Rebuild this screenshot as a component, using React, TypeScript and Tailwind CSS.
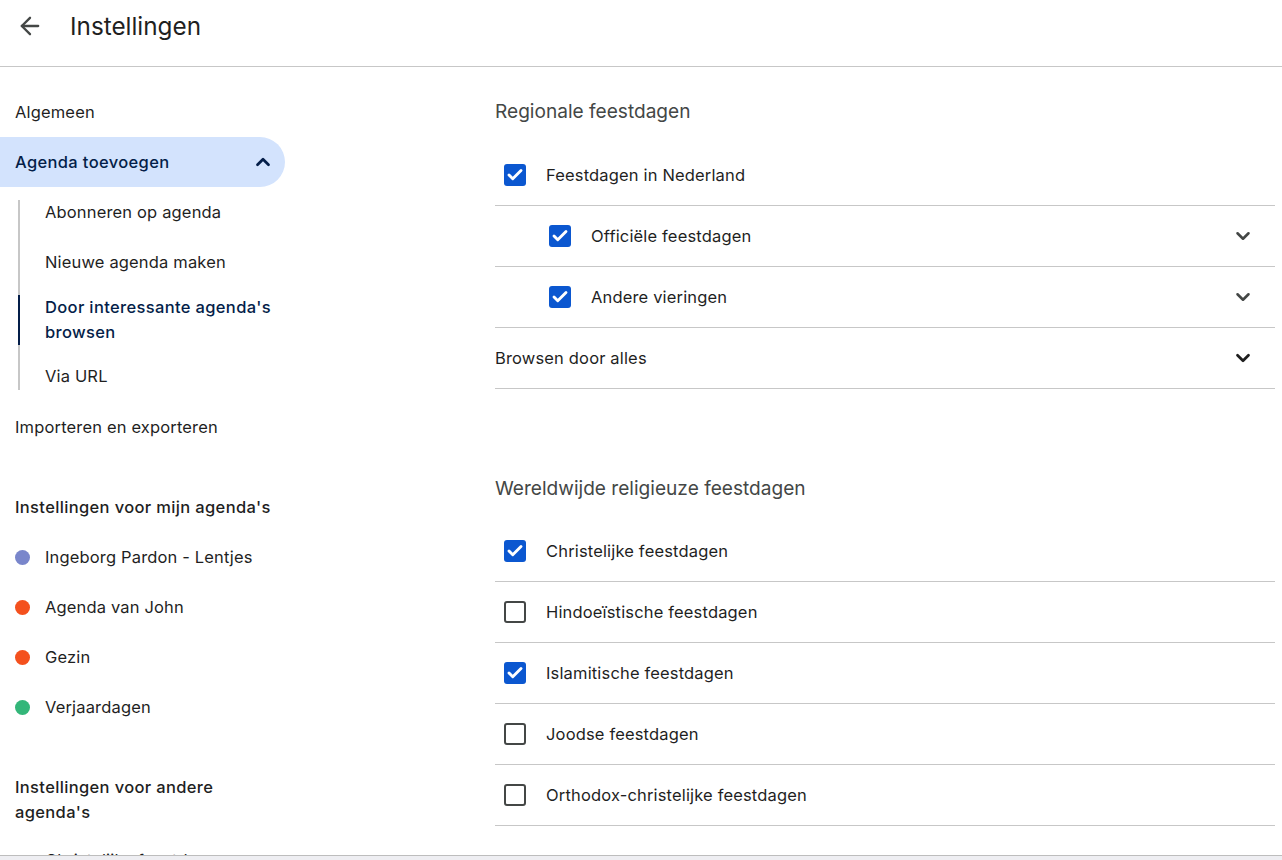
import { ArrowLeft, Check, ChevronDown, ChevronUp } from 'lucide-react'

const font = { fontFamily: 'Inter, sans-serif' }

const calendars = [
  { name: 'Ingeborg Pardon - Lentjes', dot: 'bg-[#7986cb]' },
  { name: 'Agenda van John', dot: 'bg-[#f4511e]' },
  { name: 'Gezin', dot: 'bg-[#f4511e]' },
  { name: 'Verjaardagen', dot: 'bg-[#33b679]' },
]

const religious = [
  { label: 'Christelijke feestdagen', checked: true },
  { label: 'Hindoeïstische feestdagen', checked: false },
  { label: 'Islamitische feestdagen', checked: true },
  { label: 'Joodse feestdagen', checked: false },
  { label: 'Orthodox-christelijke feestdagen', checked: false },
]

function Checkbox({ checked }: { checked: boolean }) {
  if (!checked) {
    return <div className="w-[22px] h-[22px] shrink-0 rounded-[3px] border-2 border-[#444746]" />
  }
  return (
    <div className="w-[22px] h-[22px] shrink-0 rounded-[3px] bg-[#0b57d0] flex items-center justify-center">
      <Check className="w-[18px] h-[18px] text-white" strokeWidth={3.8} />
    </div>
  )
}

function Row({ label, checked, nested, chevron }: { label: string; checked: boolean; nested?: boolean; chevron?: boolean }) {
  return (
    <div className={`h-[61px] flex items-center border-b border-[#c7c7c7] ${nested ? 'pl-[54px]' : 'pl-[9px]'}`}>
      <Checkbox checked={checked} />
      <span className="ml-[20px] text-[16.5px] tracking-[0.16px] text-[#1f1f1f]">{label}</span>
      {chevron && <ChevronDown className="w-[22px] h-[22px] ml-auto mr-[21px] text-[#444746]" strokeWidth={2.8} />}
    </div>
  )
}

export default function App() {
  return (
    <div style={font} className="w-[1282px] h-[860px] overflow-hidden bg-white relative">
      <header className="h-[67px] border-b border-[#c7c7c7] flex items-center pb-[14px]">
        <ArrowLeft className="w-[28px] h-[28px] ml-[16px] text-[#444746]" strokeWidth={2} />
        <h1 className="ml-[26px] text-[24.3px] text-[#1f1f1f]">Instellingen</h1>
      </header>

      <div className="flex">
        <nav className="w-[285px] shrink-0 pt-[20px] text-[16.5px] tracking-[0.16px] text-[#1f1f1f]">
          <div className="h-[50px] pl-[15px] flex items-center">Algemeen</div>
          <div className="h-[50px] pl-[15px] pr-[11px] flex items-center justify-between rounded-r-full bg-[#d3e3fd] text-[#041e49] font-medium tracking-[0.35px]">
            Agenda toevoegen
            <ChevronUp className="w-[22px] h-[22px]" strokeWidth={3} />
          </div>

          <div className="ml-[18px] mt-[13px] h-[190px] border-l-2 border-[#c7c7c7] flex flex-col">
            <div className="h-[24px] pl-[25px] flex items-center">Abonneren op agenda</div>
            <div className="h-[50px] mt-[13px] pl-[25px] flex items-center">Nieuwe agenda maken</div>
            <div className="-ml-[2px] h-[50px] mt-[8px] pl-[25px] border-l-2 border-[#041e49] text-[#041e49] font-medium tracking-[0.35px] leading-[25px] flex items-center">
              Door interessante agenda's browsen
            </div>
            <div className="h-[27px] mt-[18px] pl-[25px] flex items-center">Via URL</div>
          </div>

          <div className="h-[50px] mt-[12px] pl-[15px] flex items-center">Importeren en exporteren</div>

          <div className="h-[50px] mt-[30px] pl-[15px] flex items-center font-medium tracking-[0.35px] whitespace-nowrap">Instellingen voor mijn agenda's</div>
          {calendars.map(c => (
            <div key={c.name} className="h-[50px] pl-[15px] flex items-center">
              <span className={`w-[15px] h-[15px] rounded-full ${c.dot}`} />
              <span className="ml-[15px]">{c.name}</span>
            </div>
          ))}

          <div className="mt-[43px] pl-[15px] pr-[40px] font-medium tracking-[0.35px] leading-[25px]">Instellingen voor andere agenda's</div>
          <div className="mt-[23px] pl-[45px] text-[#1f1f1f] whitespace-nowrap">Christelijke feestdagen</div>
        </nav>

        <main className="ml-[210px] w-[780px]">
          <h2 className="mt-[30px] text-[19.1px] leading-[28px] text-[#444746]">Regionale feestdagen</h2>
          <div className="mt-[20px]">
            <Row label="Feestdagen in Nederland" checked />
            <Row label="Officiële feestdagen" checked nested chevron />
            <Row label="Andere vieringen" checked nested chevron />
            <div className="h-[61px] flex items-center border-b border-[#c7c7c7] text-[16.5px] tracking-[0.16px] text-[#1f1f1f]">
              Browsen door alles
              <ChevronDown className="w-[22px] h-[22px] ml-auto mr-[21px] text-[#1f1f1f]" strokeWidth={3} />
            </div>
          </div>

          <h2 className="mt-[85px] text-[19.1px] leading-[28px] text-[#444746]">Wereldwijde religieuze feestdagen</h2>
          <div className="mt-[19px]">
            {religious.map(r => <Row key={r.label} label={r.label} checked={r.checked} />)}
          </div>
        </main>
      </div>

      {/* browser window edge along the bottom */}
      <div className="absolute left-0 right-0 bottom-0 h-[5px] bg-[#eeeef2] border-t border-[#bdbdbd]" />
    </div>
  )
}
